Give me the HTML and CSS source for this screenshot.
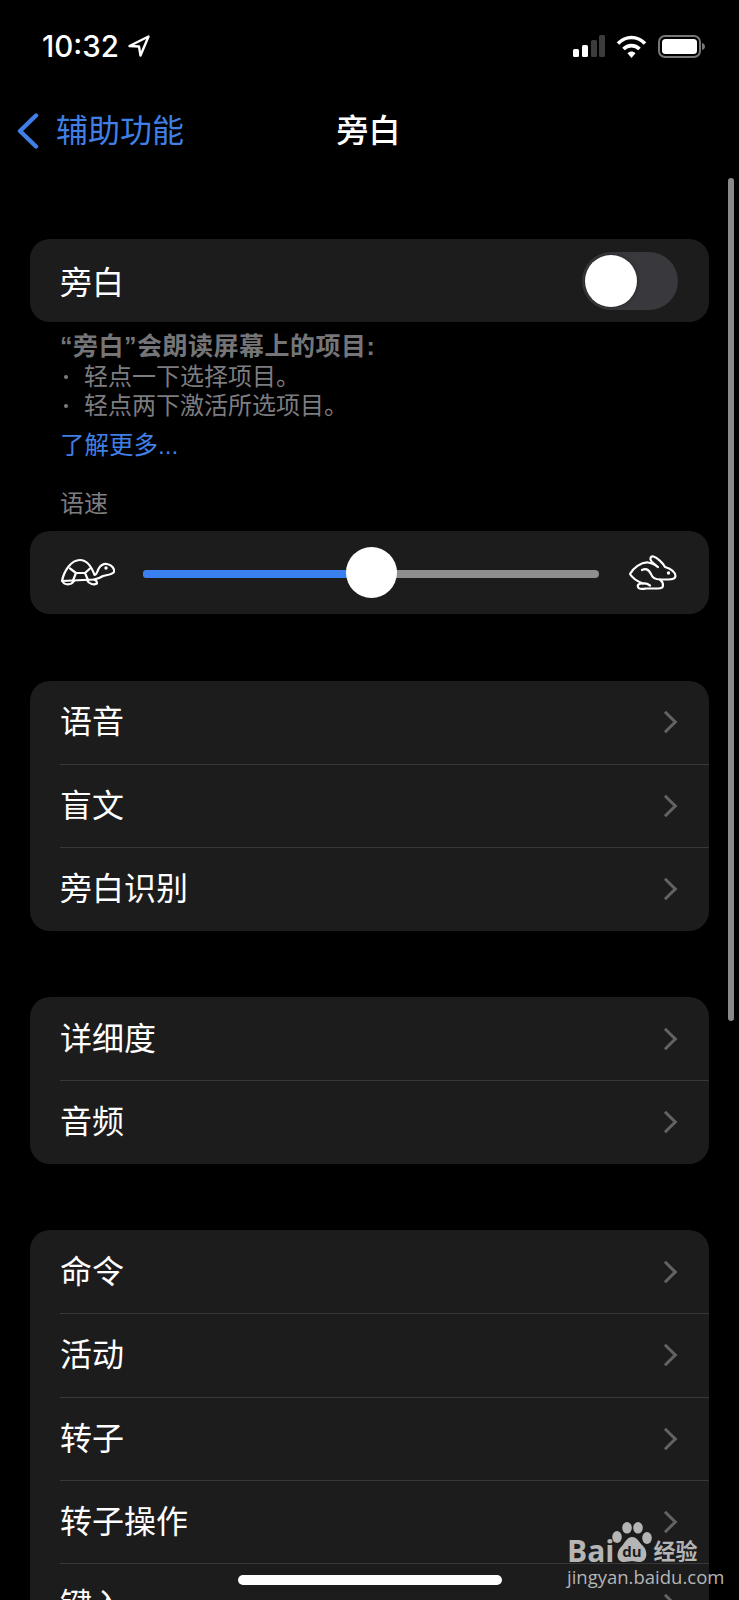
FILE: index.html
```html
<!DOCTYPE html>
<html lang="zh-CN">
<head>
    <meta charset="UTF-8">
    <meta name="viewport" content="width=device-width, initial-scale=1.0">
    <title>旁白</title>
    <link rel="stylesheet" href="styles.css">
</head>
<body>

<header class="status-bar">
    <div class="status-time">
        <span>10:32</span>
        <svg class="location-icon" width="22" height="22" viewBox="0 0 22 22">
            <path d="M20.5 1.5 L1.5 11 L11 11.5 L12.5 20.5 Z" fill="none" stroke="#fff" stroke-width="2.4" stroke-linejoin="round"/>
        </svg>
    </div>
    <div class="status-icons">
        <svg width="32" height="22" viewBox="0 0 32 22">
            <rect x="0" y="14" width="6" height="8" rx="1.5" fill="#fff"/>
            <rect x="9" y="10" width="6" height="12" rx="1.5" fill="#fff"/>
            <rect x="18" y="5" width="6" height="17" rx="1.5" fill="#3c3c3c"/>
            <rect x="26" y="0" width="6" height="22" rx="1.5" fill="#3c3c3c"/>
        </svg>
        <svg width="31" height="23" viewBox="0 0 31 23">
            <path d="M2 8.5 C10 0.5 21 0.5 29 8.5" fill="none" stroke="#fff" stroke-width="3.6"/>
            <path d="M7.5 14 C12 9.5 19 9.5 23.5 14" fill="none" stroke="#fff" stroke-width="3.6"/>
            <path d="M11.5 18.2 L15.5 23 L19.5 18.2 C17 16 14 16 11.5 18.2 Z" fill="#fff"/>
        </svg>
        <svg width="47" height="23" viewBox="0 0 47 23">
            <rect x="1" y="1" width="41" height="21" rx="6" fill="none" stroke="#777" stroke-width="2"/>
            <rect x="4" y="4" width="35" height="15" rx="3.5" fill="#fff"/>
            <path d="M44 8 C46 8.5 47 10 47 11.5 C47 13 46 14.5 44 15 Z" fill="#777"/>
        </svg>
    </div>
</header>

<nav class="nav-bar">
    <div class="nav-back">
        <svg width="24" height="36" viewBox="0 0 24 36">
            <path d="M20 2.5 L4 18 L20 33.5" fill="none" stroke="#3f7fe6" stroke-width="4.4" stroke-linecap="round" stroke-linejoin="round"/>
        </svg>
        <span>辅助功能</span>
    </div>
    <h1 class="nav-title">旁白</h1>
</nav>

<main class="content">
    <section class="card">
        <div class="row row-switch">
            <span class="row-label">旁白</span>
            <div class="switch"><div class="switch-knob"></div></div>
        </div>
    </section>

    <div class="note">
        <p class="note-title">“旁白”会朗读屏幕上的项目:</p>
        <ul class="note-list">
            <li>轻点一下选择项目。</li>
            <li>轻点两下激活所选项目。</li>
        </ul>
        <a class="note-link">了解更多...</a>
    </div>

    <div class="section-label">语速</div>

    <section class="card slider-card">
        <svg width="66" height="44" viewBox="0 0 66 44">
            <g fill="none" stroke="#fff" stroke-width="2.2" stroke-linejoin="round" stroke-linecap="round">
                <path d="M6 30 C8 20 15 9 24 9 C31 9 36 17 38.5 24 C40.5 24 41 21 43 17 C45 14 48 12.5 51 13 C56 14 59 18 58 21 C56 24 50 24 47 25 C44 27 41 28 38 28.5 Z"/>
                <path d="M14 17.5 L20 22 H29 L34 17.5 M20 22 L17 29.5 M29 22 L32 29"/>
                <path d="M6.5 30 C8 34.5 15 34.5 18 30"/>
                <path d="M31 29 C33 33.5 38 34 41 32.5 C41 30 40 29 38 28.5"/>
            </g>
            <circle cx="50" cy="17" r="1.7" fill="#fff"/>
        </svg>
        <div class="slider-track">
            <div class="slider-fill"></div>
            <div class="slider-knob"></div>
        </div>
        <svg width="66" height="48" viewBox="0 0 66 48">
            <g fill="none" stroke="#fff" stroke-width="2.2" stroke-linejoin="round" stroke-linecap="round">
                <path d="M8 25 C11 19 19 13 26 13.5 C30 14 33 16 36 18 L30 13 C27 10 28.5 7 31.5 7.5 C35 8.5 41 14 43 18 C48 19.5 53 22 53.5 27 C53.5 30 50 30.5 46 30.5 H38 C40 32 41 34 41 36.5 C41 39 39 39.5 36 39.5 H24 C21 40 17 41 16 38 C15 35.5 18 34 21 34.5 C17 33 11 30 8 25 Z"/>
                <path d="M20 21 C24 19 27 21 29 25 C30 28 33 30.5 38 30.5"/>
                <path d="M21 34.5 C24 34 26 35 28 36.5"/>
            </g>
            <circle cx="46.5" cy="24" r="1.7" fill="#fff"/>
        </svg>
    </section>

    <section class="card group-first">
        <div class="row"><span class="row-label">语音</span><span class="chevron"></span></div>
        <div class="row"><span class="row-label">盲文</span><span class="chevron"></span></div>
        <div class="row"><span class="row-label">旁白识别</span><span class="chevron"></span></div>
    </section>

    <section class="card group">
        <div class="row"><span class="row-label">详细度</span><span class="chevron"></span></div>
        <div class="row"><span class="row-label">音频</span><span class="chevron"></span></div>
    </section>

    <section class="card group">
        <div class="row"><span class="row-label">命令</span><span class="chevron"></span></div>
        <div class="row"><span class="row-label">活动</span><span class="chevron"></span></div>
        <div class="row"><span class="row-label">转子</span><span class="chevron"></span></div>
        <div class="row"><span class="row-label">转子操作</span><span class="chevron"></span></div>
        <div class="row"><span class="row-label">键入</span><span class="chevron"></span></div>
    </section>
</main>

<div class="scroll-bar"></div>

<div class="watermark">
    <div class="watermark-logo">
        <span class="watermark-bai">Bai</span>
        <svg class="watermark-paw" width="40" height="41" viewBox="0 0 40 41">
            <ellipse cx="5" cy="15" rx="4.8" ry="6" fill="#b5b5b5"/>
            <ellipse cx="15" cy="5.8" rx="4.8" ry="5.8" fill="#b5b5b5"/>
            <ellipse cx="26" cy="5.8" rx="4.8" ry="5.8" fill="#b5b5b5"/>
            <ellipse cx="35" cy="16" rx="4.8" ry="6" fill="#b5b5b5"/>
            <path d="M20 15 C25 15 27 20 31 24 C36 29 36 40 27 40 C24 40 22 39 20 39 C18 39 15 40 12 40 C4 40 4 30 9 25 C13 21 15 15 20 15 Z" fill="#b5b5b5"/>
            <text x="20" y="35" text-anchor="middle" class="watermark-du">du</text>
        </svg>
        <span class="watermark-cn">经验</span>
    </div>
    <div class="watermark-url">jingyan.baidu.com</div>
</div>

<div class="home-bar"></div>

</body>
</html>
```

FILE: styles.css
```css
* {
    box-sizing: border-box;
}

html, body {
    margin: 0;
    padding: 0;
}

body {
    position: relative;
    width: 739px;
    height: 1600px;
    overflow: hidden;
    background-color: #000;
    color: #fff;
    font-family: "Liberation Sans", "Noto Sans CJK SC", sans-serif;
}

.status-bar {
    display: flex;
    justify-content: space-between;
    align-items: center;
    height: 92px;
    padding: 0 34px 0 42px;
}

.status-time {
    display: flex;
    align-items: center;
    gap: 9px;
    font-family: Inter, sans-serif;
    font-size: 29.5px;
    font-weight: 500;
}

.status-icons {
    display: flex;
    align-items: center;
    gap: 11px;
}

.nav-bar {
    position: relative;
    display: flex;
    justify-content: center;
    align-items: center;
    height: 78px;
}

.nav-back {
    position: absolute;
    left: 16px;
    top: 21px;
    display: flex;
    align-items: center;
    gap: 16px;
    font-size: 32px;
    line-height: 36px;
    color: #3f7fe6;
}

.nav-title {
    margin: 0;
    font-size: 32px;
    font-weight: 500;
    line-height: 36px;
    transform: translateX(-1px);
}

.content {
    padding: 69px 30px 0;
}

.card {
    background-color: #1c1c1d;
    border-radius: 20px;
    overflow: hidden;
}

.group-first {
    margin-top: 67px;
}

.group {
    margin-top: 66.5px;
}

.row {
    display: flex;
    justify-content: space-between;
    align-items: center;
    height: 83.25px;
    margin-left: 30px;
    padding-right: 32px;
    font-size: 32px;
}

.row + .row {
    border-top: 1px solid #38383a;
}

.row-label {
    margin-bottom: 6px;
}

.row-switch {
    padding-right: 31px;
}

.row-switch .row-label {
    margin-bottom: 1px;
}

.chevron {
    width: 16px;
    height: 16px;
    margin-right: 3px;
    border-top: 3.5px solid #636366;
    border-right: 3.5px solid #636366;
    transform: rotate(45deg);
}

.switch {
    width: 96px;
    height: 58px;
    padding: 3px;
    border-radius: 29px;
    background-color: #39393d;
}

.switch-knob {
    width: 52px;
    height: 52px;
    border-radius: 50%;
    background-color: #fff;
    box-shadow: 0 0 4px rgba(0, 0, 0, 0.4);
}

.note {
    padding: 10px 30px 0;
    color: #7d7d80;
    font-size: 24px;
    line-height: 29.5px;
}

.note-title {
    margin: 0;
    color: #757578;
    font-size: 25px;
    font-weight: 700;
    letter-spacing: 0.5px;
}

.note-list {
    margin: 0;
    padding: 0;
    list-style: none;
}

.note-list li {
    position: relative;
    padding-left: 24px;
}

.note-list li::before {
    content: "";
    position: absolute;
    left: 4px;
    top: 13px;
    width: 4px;
    height: 4px;
    border-radius: 50%;
    background-color: #7d7d80;
}

.note-link {
    display: block;
    margin-top: 10px;
    color: #3f7fe6;
    font-size: 24.5px;
    line-height: 30px;
}

.section-label {
    margin-top: 28px;
    padding-left: 30px;
    color: #7d7d80;
    font-size: 24px;
    line-height: 30px;
}

.slider-card {
    display: flex;
    align-items: center;
    gap: 21px;
    height: 82.5px;
    margin-top: 12.5px;
    padding: 0 21px 0 26px;
}

.slider-track {
    position: relative;
    flex: 1;
    height: 8px;
    margin: 3px 2px 0 0;
    border-radius: 4px;
    background-color: #8e8e8e;
}

.slider-fill {
    width: 50%;
    height: 100%;
    border-radius: 4px 0 0 4px;
    background-color: #3a80f0;
}

.slider-knob {
    position: absolute;
    left: 50%;
    top: 50%;
    width: 51px;
    height: 51px;
    margin: -27px 0 0 -25.5px;
    border-radius: 50%;
    background-color: #fff;
}

.scroll-bar {
    position: absolute;
    left: 728px;
    top: 178px;
    width: 6px;
    height: 843px;
    border-radius: 3px;
    background-color: #8a8a8a;
}

.home-bar {
    position: absolute;
    left: 238px;
    top: 1575px;
    width: 264px;
    height: 10px;
    border-radius: 5px;
    background-color: #fff;
}

.watermark {
    position: absolute;
    left: 567px;
    top: 1522px;
    width: 134px;
    color: #b5b5b5;
}

.watermark-logo {
    display: flex;
    align-items: flex-end;
    height: 41px;
}

.watermark-bai {
    margin-right: -2px;
    font-family: "Open Sans", sans-serif;
    font-size: 30px;
    font-weight: 700;
    line-height: 25px;
}

.watermark-paw {
    flex: none;
}

.watermark-du {
    font-family: "Open Sans", sans-serif;
    font-size: 15px;
    font-weight: 700;
    fill: #1c1c1d;
}

.watermark-cn {
    margin: 0 0 2px 1px;
    font-family: "Noto Sans CJK SC", sans-serif;
    font-size: 22px;
    font-weight: 700;
    line-height: 24px;
}

.watermark-url {
    margin-top: 3px;
    font-family: "Open Sans", sans-serif;
    font-size: 18.5px;
    line-height: 22px;
    white-space: nowrap;
}
```
